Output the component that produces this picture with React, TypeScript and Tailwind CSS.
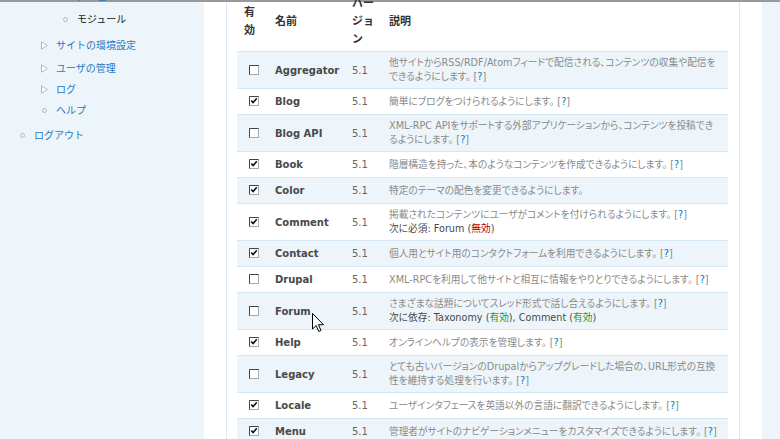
import React from 'react';

const Help = () => (
  <span> [<span className="text-[#027ac6]">?</span>]</span>
);

type Row = { name: string; checked: boolean; lines: React.ReactNode[] };

const rows: Row[] = [
  {
    name: 'Aggregator',
    checked: false,
    lines: [
      '他サイトからRSS/RDF/Atomフィードで配信される、コンテンツの収集や配信を',
      <>できるようにします。<Help /></>,
    ],
  },
  { name: 'Blog', checked: true, lines: [<>簡単にブログをつけられるようにします。<Help /></>] },
  {
    name: 'Blog API',
    checked: false,
    lines: [
      'XML-RPC APIをサポートする外部アプリケーションから、コンテンツを投稿でき',
      <>るようにします。<Help /></>,
    ],
  },
  { name: 'Book', checked: true, lines: [<>階層構造を持った、本のようなコンテンツを作成できるようにします。<Help /></>] },
  { name: 'Color', checked: true, lines: ['特定のテーマの配色を変更できるようにします。'] },
  {
    name: 'Comment',
    checked: true,
    lines: [
      <>掲載されたコンテンツにユーザがコメントを付けられるようにします。<Help /></>,
      <span className="text-[#494949]">
        次に必須: Forum (<span className="text-[#b00]">無効</span>)
      </span>,
    ],
  },
  { name: 'Contact', checked: true, lines: [<>個人用とサイト用のコンタクトフォームを利用できるようにします。<Help /></>] },
  { name: 'Drupal', checked: false, lines: [<>XML-RPCを利用して他サイトと相互に情報をやりとりできるようにします。<Help /></>] },
  {
    name: 'Forum',
    checked: false,
    lines: [
      <>さまざまな話題についてスレッド形式で話し合えるようにします。<Help /></>,
      <span className="text-[#494949]">
        次に依存: Taxonomy (<span className="text-[#2a9a14]">有効</span>), Comment (
        <span className="text-[#2a9a14]">有効</span>)
      </span>,
    ],
  },
  { name: 'Help', checked: true, lines: [<>オンラインヘルプの表示を管理します。<Help /></>] },
  {
    name: 'Legacy',
    checked: false,
    lines: [
      'とても古いバージョンのDrupalからアップグレードした場合の、URL形式の互換',
      <>性を維持する処理を行います。<Help /></>,
    ],
  },
  { name: 'Locale', checked: true, lines: [<>ユーザインタフェースを英語以外の言語に翻訳できるようにします。<Help /></>] },
  { name: 'Menu', checked: true, lines: [<>管理者がサイトのナビゲーションメニューをカスタマイズできるようにします。<Help /></>] },
];

function Checkbox({ checked }: { checked: boolean }) {
  return (
    <svg width="10" height="10" viewBox="0 0 10 10" className="block ml-[5px] mt-[-1px]">
      <rect x="0.5" y="0.5" width="9" height="9" fill="#fff" stroke="#aaa" />
      <path d="M0.5 9.5 V0.5 H9.5" stroke="#444" fill="none" />
      {checked && <path d="M2.2 4.4 L4.1 6.6 L7.8 2.3" stroke="#111" strokeWidth="1.6" fill="none" />}
    </svg>
  );
}

const Circle = () => <span className="block w-[5px] h-[5px] rounded-full border border-[#b8b8b8]" />;
const Tri = () => (
  <svg width="7" height="9" viewBox="0 0 7 9" className="block">
    <path d="M0.5 0.8 L6.3 4.5 L0.5 8.2 Z" fill="#fff" stroke="#b8b8b8" />
  </svg>
);

function NavItem({
  pl,
  bw,
  bullet,
  text,
  mt,
  dark,
}: {
  pl: string;
  bw: string;
  bullet: React.ReactNode;
  text: string;
  mt: string;
  dark?: boolean;
}) {
  return (
    <div className={`flex items-center h-[22px] ${pl} ${mt}`}>
      <div className={`${bw} flex items-center`}>{bullet}</div>
      <span className={dark ? 'text-[#222]' : 'text-[#2878c8]'}>{text}</span>
    </div>
  );
}

export default function App() {
  return (
    <div className="w-[780px] h-[439px] overflow-hidden bg-white relative flex flex-col">
      <div className="h-[2px] bg-[#999] shrink-0" />
      <div className="flex flex-1 min-h-0">
        {/* left sidebar */}
        <div className="w-[204px] shrink-0 bg-[#edf5fa] text-[10px] leading-[14px] [font-family:'Noto_Sans_CJK_JP',sans-serif]">
          <div className="mt-[-16px] flex flex-col">
            <div className="flex items-center h-[22px] pl-[77px]">
              <span className="text-[#2878c8]">メニュー</span>
            </div>
            <NavItem pl="pl-[63px]" bw="w-[14px]" bullet={<Circle />} text="モジュール" mt="mt-0" dark />
            <NavItem pl="pl-[41px]" bw="w-[15px]" bullet={<Tri />} text="サイトの環境設定" mt="mt-[4px]" />
            <NavItem pl="pl-[41px]" bw="w-[15px]" bullet={<Tri />} text="ユーザの管理" mt="mt-[1px]" />
            <NavItem pl="pl-[41px]" bw="w-[15px]" bullet={<Tri />} text="ログ" mt="mt-[-1px]" />
            <NavItem pl="pl-[42px]" bw="w-[14px]" bullet={<Circle />} text="ヘルプ" mt="mt-[-1px]" />
            <NavItem pl="pl-[20px]" bw="w-[14px]" bullet={<Circle />} text="ログアウト" mt="mt-[3px]" />
          </div>
        </div>
        <div className="w-[22px] shrink-0" />
        {/* main */}
        <div className="w-[514px] shrink-0 border-x border-[#dce9f4] pl-[10px] pr-[11px]">
          <table className="table-fixed w-full border-collapse mt-[-13px] text-[#494949]">
            <colgroup>
              <col className="w-[33px]" />
              <col className="w-[77px]" />
              <col className="w-[37px]" />
              <col />
            </colgroup>
            <thead>
              <tr className="border-b border-[#d3e7f4] text-[11px] leading-[18px] font-bold text-left [font-family:'Noto_Sans_CJK_JP',sans-serif] text-[#333]">
                <th className="py-1 pl-[7px] pr-0 align-middle font-bold">
                  有<br />効
                </th>
                <th className="py-1 px-[5px] align-middle font-bold">名前</th>
                <th className="py-1 px-[5px] align-middle font-bold">
                  バー<br />ジョ<br />ン
                </th>
                <th className="py-1 px-[5px] align-middle font-bold">説明</th>
              </tr>
            </thead>
            <tbody>
              {rows.map((r, i) => (
                <tr
                  key={r.name}
                  className={`border-b border-[#d3e7f4] ${i % 2 === 0 ? 'bg-[#edf5fa]' : 'bg-white'}`}
                >
                  <td className="py-1 pl-[7px] pr-0 align-middle">
                    <Checkbox checked={r.checked} />
                  </td>
                  <td className="py-1 px-[5px] align-middle text-[10px] leading-[17px] font-bold whitespace-nowrap [font-family:'DejaVu_Sans',sans-serif] text-[#494949]">
                    {r.name}
                  </td>
                  <td className="py-1 px-[5px] align-middle text-[10px] leading-[17px] [font-family:'DejaVu_Sans',sans-serif] text-[#666]">
                    5.1
                  </td>
                  <td className="py-1 px-[5px] align-middle text-[9.7px] leading-[14px] whitespace-nowrap text-[#8a8a8a] [font-family:'DejaVu_Sans','Noto_Sans_CJK_JP',sans-serif] [font-feature-settings:'palt']">
                    {r.lines.map((l, j) => (
                      <div key={j}>{l}</div>
                    ))}
                  </td>
                </tr>
              ))}
            </tbody>
          </table>
        </div>
        <div className="w-[22px] shrink-0" />
        <div className="flex-1 bg-[#edf5fa]" />
      </div>
      {/* mouse cursor */}
      <svg
        width="13"
        height="20"
        viewBox="0 0 13 20"
        className="absolute left-[312px] top-[313px]"
      >
        <path
          d="M0.5 0.5 L0.5 16 L4.2 12.5 L6.8 18.5 L9 17.5 L6.5 11.7 L11.5 11.7 Z"
          fill="#fff"
          stroke="#000"
          strokeWidth="1"
          strokeLinejoin="miter"
        />
      </svg>
    </div>
  );
}
